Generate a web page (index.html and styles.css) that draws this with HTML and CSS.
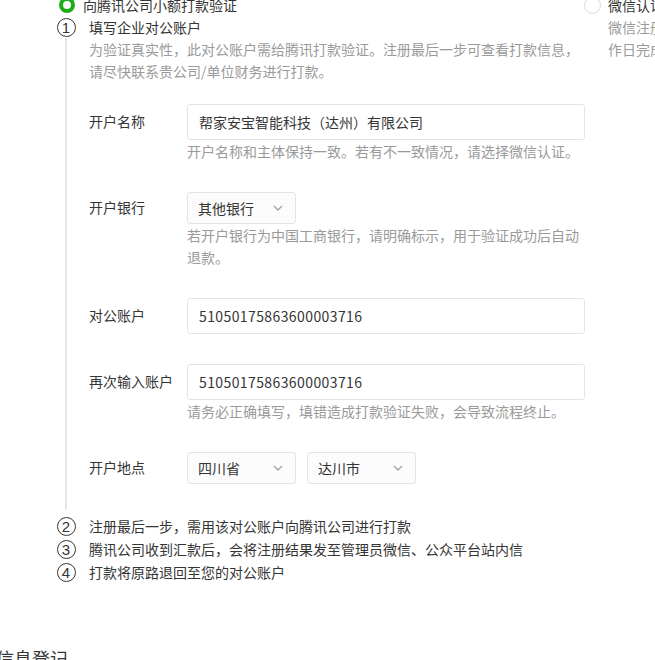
FILE: index.html
```html
<!DOCTYPE html>
<html lang="zh-CN">
<head>
<meta charset="utf-8">
<title>对公账户打款验证</title>
<link rel="stylesheet" href="styles.css">
</head>
<body>
<div class="page">
  <div class="options">
    <div class="opt-main">
      <div class="radio-row">
        <span class="radio radio-on"></span>
        <span class="radio-label">向腾讯公司小额打款验证</span>
      </div>

      <div class="step step-first">
        <div class="step-rail">
          <span class="step-num">1</span>
          <span class="step-line"></span>
        </div>
        <div class="step-body">
          <div class="step-title">填写企业对公账户</div>
          <div class="step-desc">为验证真实性，此对公账户需给腾讯打款验证。注册最后一步可查看打款信息，<br>请尽快联系贵公司/单位财务进行打款。</div>

          <div class="form">
            <div class="form-row">
              <div class="form-label">开户名称</div>
              <div class="form-field">
                <div class="input">帮家安宝智能科技（达州）有限公司</div>
                <div class="hint">开户名称和主体保持一致。若有不一致情况，请选择微信认证。</div>
              </div>
            </div>

            <div class="form-row">
              <div class="form-label label-sm">开户银行</div>
              <div class="form-field">
                <div class="select-group">
                  <div class="select"><span>其他银行</span><svg class="chev" width="10" height="6" viewBox="0 0 10 6"><path d="M1 1l4 4 4-4" fill="none" stroke="#a3a3a3" stroke-width="1.3"/></svg></div>
                </div>
                <div class="hint">若开户银行为中国工商银行，请明确标示，用于验证成功后自动<br>退款。</div>
              </div>
            </div>

            <div class="form-row">
              <div class="form-label">对公账户</div>
              <div class="form-field">
                <div class="input num">51050175863600003716</div>
              </div>
            </div>

            <div class="form-row">
              <div class="form-label">再次输入账户</div>
              <div class="form-field">
                <div class="input num">51050175863600003716</div>
                <div class="hint">请务必正确填写，填错造成打款验证失败，会导致流程终止。</div>
              </div>
            </div>

            <div class="form-row">
              <div class="form-label label-sm">开户地点</div>
              <div class="form-field">
                <div class="select-group">
                  <div class="select"><span>四川省</span><svg class="chev" width="10" height="6" viewBox="0 0 10 6"><path d="M1 1l4 4 4-4" fill="none" stroke="#a3a3a3" stroke-width="1.3"/></svg></div>
                  <div class="select"><span>达川市</span><svg class="chev" width="10" height="6" viewBox="0 0 10 6"><path d="M1 1l4 4 4-4" fill="none" stroke="#a3a3a3" stroke-width="1.3"/></svg></div>
                </div>
              </div>
            </div>
          </div>
        </div>
      </div>

      <div class="step step-small">
        <div class="step-rail"><span class="step-num">2</span></div>
        <div class="step-body"><div class="step-title">注册最后一步，需用该对公账户向腾讯公司进行打款</div></div>
      </div>
      <div class="step step-small">
        <div class="step-rail"><span class="step-num">3</span></div>
        <div class="step-body"><div class="step-title">腾讯公司收到汇款后，会将注册结果发至管理员微信、公众平台站内信</div></div>
      </div>
      <div class="step step-small">
        <div class="step-rail"><span class="step-num">4</span></div>
        <div class="step-body"><div class="step-title">打款将原路退回至您的对公账户</div></div>
      </div>
    </div>

    <div class="opt-side">
      <div class="radio-row">
        <span class="radio"></span>
        <span class="radio-label">微信认证</span>
      </div>
      <div class="side-desc">微信注册需支付认证审核费用，审核将在1-5个工<br>作日完成</div>
    </div>
  </div>

  <h2 class="section-title">信息登记</h2>
</div>
</body>
</html>
```

FILE: styles.css
```css
html, body {
  margin: 0;
  padding: 0;
  background: #ffffff;
  overflow: hidden;
}

body {
  width: 655px;
  height: 660px;
  font-family: "Noto Sans CJK SC", "Noto Sans", sans-serif;
  font-size: 14px;
  line-height: 22px;
  color: #353535;
}

.page {
  margin-top: -6px;
}

.options {
  display: flex;
  align-items: flex-start;
}

.opt-main {
  margin-left: 56px;
  width: 520px;
  flex: none;
}

.opt-side {
  margin-left: 8px;
  flex: none;
  white-space: nowrap;
}

.radio-row {
  display: flex;
  align-items: center;
  height: 22px;
}

.opt-main .radio-row {
  padding-left: 3px;
}

.radio {
  width: 16px;
  height: 16px;
  box-sizing: border-box;
  border-radius: 50%;
  border: 1px solid #d9d9d9;
  background: #fff;
  flex: none;
  margin-right: 8px;
}

.radio-on {
  border: 4px solid #1aad19;
}

.opt-side .radio {
  width: 17px;
  height: 17px;
  margin-right: 7px;
}

.side-desc {
  color: #9a9a9a;
  padding-left: 24px;
}

/* steps */
.step {
  display: flex;
  align-items: stretch;
}

.step-small {
  line-height: 23px;
}

.step-rail {
  width: 20px;
  flex: none;
  display: flex;
  flex-direction: column;
  align-items: center;
  margin-right: 13px;
}

.step-num {
  width: 19px;
  height: 19px;
  box-sizing: border-box;
  border: 1px solid #353535;
  border-radius: 50%;
  display: flex;
  align-items: center;
  justify-content: center;
  font-size: 15px;
  line-height: 1;
  font-family: "Liberation Sans", "Noto Sans", sans-serif;
  color: #353535;
  margin-top: 2px;
  flex: none;
}

.step-line {
  flex: 1;
  width: 2px;
  background: #e6e6e6;
  margin-top: 1px;
  margin-bottom: 5px;
}

.step-body {
  flex: 1;
  min-width: 0;
}

.step-title {
  white-space: nowrap;
}

.step-desc {
  color: #9a9a9a;
  white-space: nowrap;
}

/* form */
.form {
  margin-top: 22px;
}

.form-row {
  display: flex;
  align-items: flex-start;
  margin-bottom: 30px;
}

.form-row:last-child {
  margin-bottom: 31px;
}

.form-label {
  width: 98px;
  flex: none;
  line-height: 36px;
  height: 36px;
  margin-top: -1px;
  white-space: nowrap;
}

.form-label.label-sm {
  line-height: 32px;
  height: 32px;
}

.form-field {
  flex: none;
  width: 400px;
}

.input {
  width: 398px;
  height: 36px;
  box-sizing: border-box;
  border: 1px solid #e4e4e4;
  border-radius: 3px;
  background: #fff;
  padding: 0 11px;
  line-height: 34px;
  white-space: nowrap;
}

.input.num {
  letter-spacing: 0.4px;
}

.select-group {
  display: flex;
  gap: 11px;
}

.select {
  width: 109px;
  height: 32px;
  box-sizing: border-box;
  border: 1px solid #e4e4e4;
  border-radius: 3px;
  background: #fcfcfc;
  padding: 0 12px 0 10px;
  display: flex;
  align-items: center;
  justify-content: space-between;
  line-height: 30px;
}

.chev {
  flex: none;
}

.hint {
  color: #9a9a9a;
  white-space: nowrap;
}

.section-title {
  margin: 62px 0 0 -4px;
  font-size: 18px;
  font-weight: normal;
  line-height: 24px;
  color: #353535;
}
```
